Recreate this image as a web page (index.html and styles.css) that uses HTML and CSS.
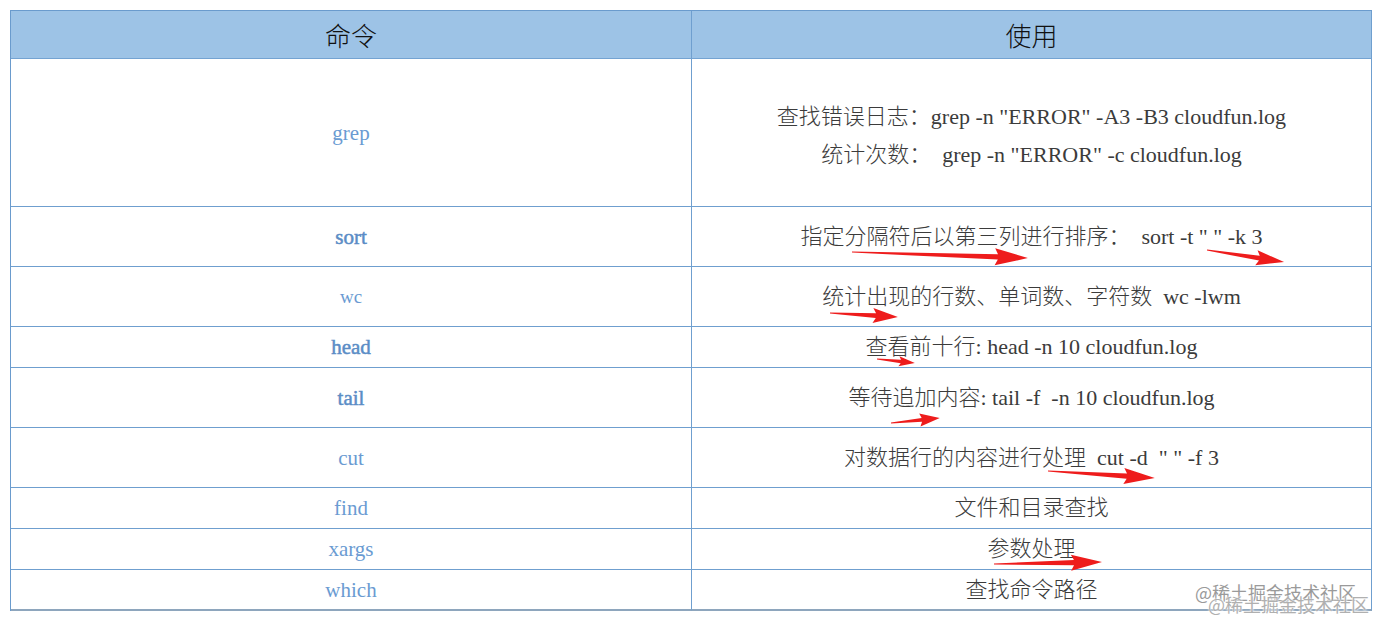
FILE: index.html
```html
<!DOCTYPE html>
<html lang="zh-CN">
<head>
<meta charset="utf-8">
<title>命令</title>
<link rel="stylesheet" href="styles.css">
</head>
<body>
<div class="page">
  <div class="table">
    <div class="cell head-cell">命令</div>
    <div class="cell head-cell">使用</div>

    <div class="cell cmd h148">grep</div>
    <div class="cell use h148 multi">
      <div>查找错误日志：grep -n "ERROR" -A3 -B3 cloudfun.log</div>
      <div>统计次数：&nbsp; grep -n "ERROR" -c cloudfun.log</div>
    </div>

    <div class="cell cmd strong h60">sort</div>
    <div class="cell use h60">指定分隔符后以第三列进行排序：&nbsp; sort -t " " -k 3</div>

    <div class="cell cmd small h60">wc</div>
    <div class="cell use h60">统计出现的行数、单词数、字符数&nbsp; wc -lwm</div>

    <div class="cell cmd strong h41">head</div>
    <div class="cell use h41">查看前十行: head -n 10 cloudfun.log</div>

    <div class="cell cmd strong h60">tail</div>
    <div class="cell use h60">等待追加内容: tail -f &nbsp;-n 10 cloudfun.log</div>

    <div class="cell cmd h60">cut</div>
    <div class="cell use h60">对数据行的内容进行处理&nbsp; cut -d &nbsp;" " -f 3</div>

    <div class="cell cmd h41">find</div>
    <div class="cell use h41">文件和目录查找</div>

    <div class="cell cmd h41">xargs</div>
    <div class="cell use h41">参数处理</div>

    <div class="cell cmd h41 last">which</div>
    <div class="cell use h41 last">查找命令路径</div>
  </div>

  <svg class="arrows" width="1374" height="621" viewBox="0 0 1374 621" aria-hidden="true">
    <g fill="#ee1c1c">
      <g transform="translate(852,252) rotate(1.95)">
        <polygon points="0,-0.6 146,-2.6 143,-8.5 176,0 143,8.5 146,2.6 0,0.6"/>
      </g>
      <g transform="translate(1207,250) rotate(8.9)">
        <polygon points="0,-0.6 53,-2.4 50,-7.5 78,0 50,7.5 53,2.4 0,0.6"/>
      </g>
      <g transform="translate(830,313) rotate(3.4)">
        <polygon points="0,-0.6 46,-2.4 43,-7.5 68,0 43,7.5 46,2.4 0,0.6"/>
      </g>
      <g transform="translate(877,359) rotate(6)">
        <polygon points="0,-0.5 24,-1.8 22,-5 38,0 22,5 24,1.8 0,0.5"/>
      </g>
      <g transform="translate(891,423) rotate(-5.8)">
        <polygon points="0,-0.5 31,-2 29,-6.5 49,0 29,6.5 31,2 0,0.5"/>
      </g>
      <g transform="translate(1048,471) rotate(3.7)">
        <polygon points="0,-0.6 79,-2.6 76,-8 107,0 76,8 79,2.6 0,0.6"/>
      </g>
      <g transform="translate(994,564) rotate(-1)">
        <polygon points="0,-0.6 80,-2.6 77,-8 108,0 77,8 80,2.6 0,0.6"/>
      </g>
    </g>
  </svg>

  <div class="wm wm-a">@稀土掘金技术社区</div>
  <div class="wm wm-b">@稀土掘金技术社区</div>
</div>
</body>
</html>
```
FILE: styles.css
```css
html, body {
  margin: 0;
  padding: 0;
  background: #ffffff;
}

.page {
  position: relative;
  width: 1374px;
  height: 621px;
  padding: 10px 0 0 10px;
  box-sizing: border-box;
  overflow: hidden;
}

.table {
  display: grid;
  grid-template-columns: 681px 680px;
  width: 1362px;
  border-left: 1px solid #6a9bcd;
  border-top: 1px solid #6a9bcd;
  box-sizing: border-box;
}

.cell {
  display: flex;
  flex-direction: column;
  align-items: center;
  justify-content: center;
  text-align: center;
  border-right: 1px solid #6f9fcf;
  border-bottom: 1px solid #6f9fcf;
  box-sizing: border-box;
  white-space: nowrap;
}

.head-cell {
  height: 48px;
  background: #9dc3e6;
  font-family: "Noto Sans CJK SC", sans-serif;
  font-size: 26px;
  line-height: 30px;
  color: #111111;
  font-weight: 300;
  border-bottom-color: #74a3d2;
}

.h148 { height: 148px; }
.h60 { height: 60px; }
.h41 { height: 41px; }

.last {
  border-bottom: 2px solid #8ea6bd;
}

.cmd {
  font-family: "Liberation Serif", serif;
  font-size: 21px;
  line-height: 24px;
  color: #6a9bd2;
}

.cmd.strong {
  color: #5b8dc6;
  -webkit-text-stroke: 0.5px #5b8dc6;
}

.cmd.small {
  font-size: 19px;
}

.use {
  font-family: "Liberation Serif", "Noto Sans CJK SC", serif;
  font-size: 22px;
  line-height: 24px;
  color: #3b3b3b;
  font-weight: 300;
}

.use.multi {
  line-height: 38px;
  padding-top: 7px;
}

.arrows {
  position: absolute;
  left: 0;
  top: 0;
  pointer-events: none;
}

.wm {
  position: absolute;
  font-family: "Noto Sans CJK SC", sans-serif;
  font-size: 18px;
  line-height: 22px;
  white-space: nowrap;
  pointer-events: none;
  text-shadow: 0 0 2px #ffffff, 0 0 2px #ffffff;
}

.wm-a {
  left: 1195px;
  top: 581px;
  color: #9a9a9a;
}

.wm-b {
  left: 1208px;
  top: 593px;
  color: #b0b0b0;
}
```
